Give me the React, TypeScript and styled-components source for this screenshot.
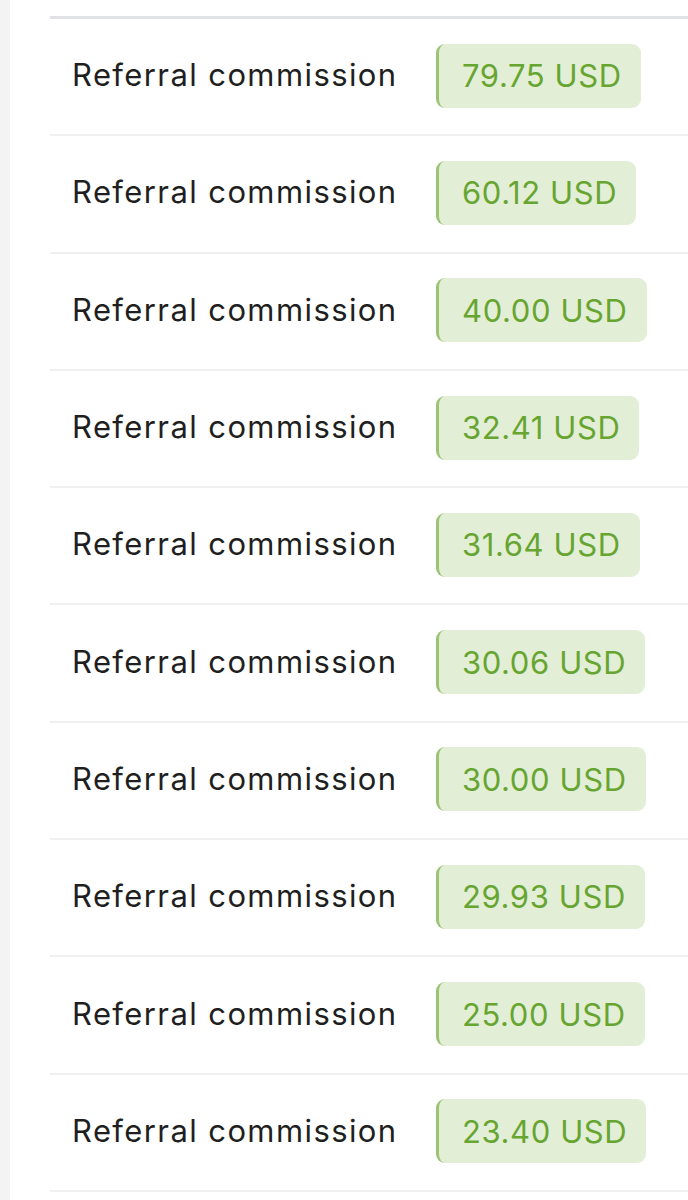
import React from "react";
import styled, { createGlobalStyle } from "styled-components";

const rows = [
  "79.75",
  "60.12",
  "40.00",
  "32.41",
  "31.64",
  "30.06",
  "30.00",
  "29.93",
  "25.00",
  "23.40",
];

export default function App() {
  return (
    <>
      <GlobalStyle />
      <Page>
        <Gutter />
        <Panel>
          <TopRule />
          {rows.map((amount, i) => (
            <Row key={i}>
              <Label>Referral commission</Label>
              <Amount>{amount} USD</Amount>
            </Row>
          ))}
        </Panel>
      </Page>
    </>
  );
}

const GlobalStyle = createGlobalStyle`
  html, body {
    margin: 0;
    padding: 0;
    background: #ffffff;
  }
  body {
    font-family: Inter, "Noto Sans", sans-serif;
  }
`;

const Page = styled.div`
  display: flex;
  height: 1200px;
  overflow: hidden;
  background: #fff;
`;

const Gutter = styled.div`
  width: 10px;
  flex-shrink: 0;
  background: #f3f3f4;
`;

const Panel = styled.div`
  flex: 1;
  padding-left: 40px;
  padding-top: 16px;
`;

const TopRule = styled.div`
  height: 3px;
  background: #e1e2e5;
`;

const Row = styled.div`
  display: flex;
  align-items: center;
  gap: 40px;
  height: 117.3px;
  box-sizing: border-box;
  padding-left: 22px;
  border-bottom: 2px solid #f0f0f2;
`;

const Label = styled.span`
  font-size: 31px;
  color: #1f1f22;
  letter-spacing: 1.4px;
  width: 324px;
  white-space: nowrap;
  margin-top: -4px;
`;

const Amount = styled.span`
  display: inline-flex;
  align-items: center;
  height: 64px;
  box-sizing: border-box;
  padding: 0 19px 0 23px;
  background: #e3eed6;
  border-left: 3px solid #9cc477;
  border-radius: 9px;
  color: #67a531;
  font-size: 31px;
  letter-spacing: 0.6px;
  margin-top: -2px;
`;
